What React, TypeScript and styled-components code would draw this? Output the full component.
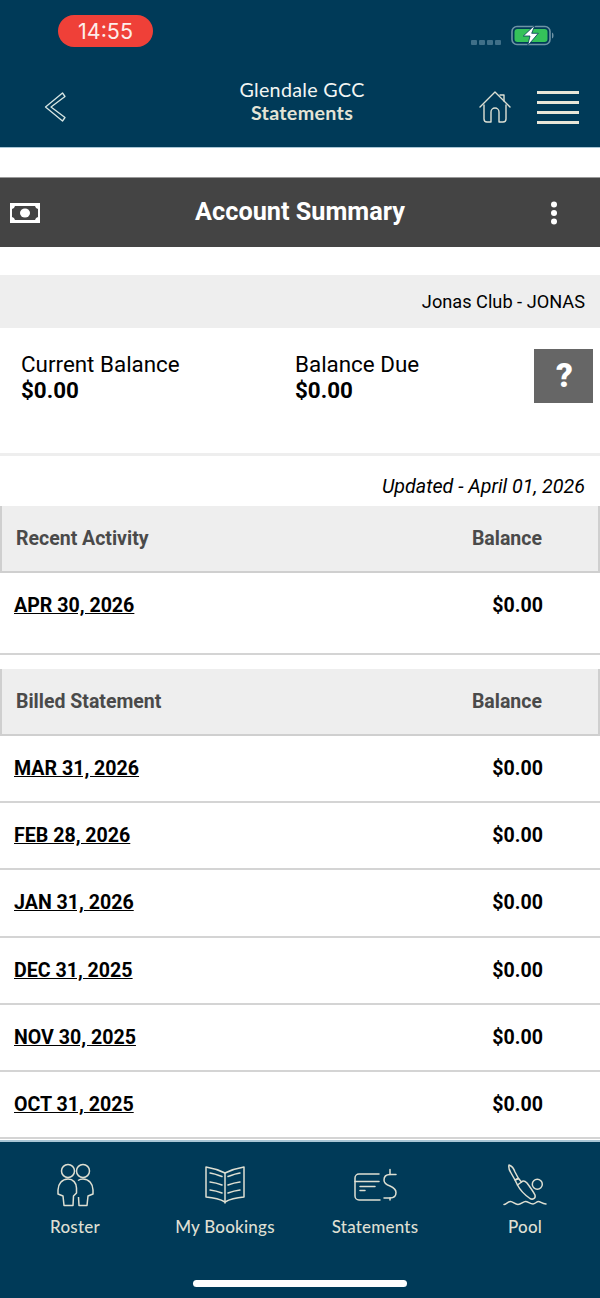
import React from 'react'
import styled, { createGlobalStyle } from 'styled-components'

const GlobalStyle = createGlobalStyle`
    html, body {
        margin: 0;
        padding: 0;
        background: #fff;
    }
    * {
        box-sizing: border-box;
    }
`

const Page = styled.div`
    width: 600px;
    height: 1298px;
    display: flex;
    flex-direction: column;
    overflow: hidden;
    font-family: 'Roboto', 'Liberation Sans', sans-serif;
    color: #000;
`

const Header = styled.header`
    height: 148px;
    flex: none;
    background: #003a58;
    border-bottom: 1px solid #a9c6d6;
`

const StatusBar = styled.div`
    height: 62px;
    padding: 15px 44px 0 58px;
    display: flex;
    justify-content: space-between;
    align-items: flex-start;
`

const TimePill = styled.div`
    width: 95px;
    height: 32px;
    border-radius: 16px;
    background: #ef4038;
    color: #fdeeea;
    font-family: 'Inter', 'Noto Sans', sans-serif;
    font-size: 21.5px;
    line-height: 32px;
    text-align: center;
`

const StatusRight = styled.div`
    display: flex;
    gap: 9px;
    margin-top: 10px;
`

const NavRow = styled.div`
    position: relative;
    height: 85px;
    padding: 5px 21px 0 44px;
    display: flex;
    align-items: center;
    justify-content: space-between;
`

const NavTitle = styled.div`
    position: absolute;
    left: 0;
    right: 0;
    top: 16px;
    padding-left: 4px;
    text-align: center;
    font-family: 'Lato', 'Noto Sans', sans-serif;
    color: #f2f5f3;
    font-size: 19.7px;
    line-height: 23px;
    letter-spacing: 0.3px;
    pointer-events: none;
    span {
        display: block;
        color: #e4e4d6;
        font-weight: 700;
    }
`

const NavRight = styled.div`
    display: flex;
    align-items: center;
    gap: 26px;
`

const Burger = styled.div`
    width: 42px;
    display: flex;
    flex-direction: column;
    gap: 7px;
    i {
        display: block;
        height: 3px;
        background: #e8e6d8;
    }
`

const TitleBar = styled.div`
    margin-top: 29px;
    height: 70px;
    flex: none;
    padding: 0 10px;
    background: #444;
    border-top: 1px solid #999;
    display: grid;
    grid-template-columns: 1fr auto 1fr;
    align-items: center;
    h1 {
        margin: -2px 0 0 0;
        color: #fff;
        font-size: 25.25px;
        font-weight: 700;
    }
    svg:last-child {
        justify-self: end;
        margin-right: 31px;
    }
`

const ClubStrip = styled.div`
    margin-top: 28px;
    height: 53px;
    flex: none;
    padding-right: 15px;
    background: #eee;
    display: flex;
    align-items: center;
    justify-content: flex-end;
    font-size: 18.2px;
`

const SummaryBlock = styled.div`
    height: 128px;
    flex: none;
    padding: 21px 7px 0 21px;
    display: flex;
    align-items: flex-start;
    border-bottom: 3px solid #eee;
`

const SummaryCell = styled.div<{ $width: number }>`
    width: ${(p) => p.$width}px;
    padding-top: 2px;
    font-size: 22.4px;
    line-height: 26px;
    font-weight: 400;
    b {
        display: block;
        font-weight: 700;
    }
`

const HelpButton = styled.div`
    width: 59px;
    height: 54px;
    margin-left: auto;
    padding-left: 2px;
    background: #666;
    color: #fff;
    font-size: 33px;
    font-weight: 900;
    line-height: 54px;
    text-align: center;
`

const UpdatedLine = styled.div`
    height: 50px;
    flex: none;
    padding: 10px 15px 0 0;
    display: flex;
    align-items: center;
    justify-content: flex-end;
    font-size: 19.7px;
    font-style: italic;
`

const HeadRow = styled.div`
    height: 67px;
    flex: none;
    padding: 0 57px 0 14px;
    background: #eee;
    border-left: 2px solid #cfcfcf;
    border-right: 2px solid #cfcfcf;
    border-bottom: 2px solid #cfcfcf;
    display: flex;
    align-items: center;
    justify-content: space-between;
    color: #4a4a4a;
    font-size: 19.5px;
    font-weight: 700;
    span:last-child {
        margin-right: -1px;
    }
`

const DataRow = styled.div<{ $tall?: boolean }>`
    height: ${(p) => (p.$tall ? 82 : 67.2)}px;
    flex: none;
    padding: ${(p) => (p.$tall ? '0 57px 15px 14px' : '0 57px 0 14px')};
    border-bottom: 2px solid #d4d4d4;
    display: flex;
    align-items: center;
    justify-content: space-between;
    font-size: 19.6px;
    font-weight: 700;
    a {
        color: #000;
        text-decoration: underline;
    }
`

const Spacer = styled.div`
    height: 14px;
    flex: none;
`

const TabBar = styled.nav`
    position: relative;
    margin-top: auto;
    height: 158px;
    flex: none;
    background: #003a58;
    border-top: 2px solid #a9c6d6;
    display: grid;
    grid-template-columns: repeat(4, 150px);
`

const Tab = styled.div`
    padding-top: 21px;
    display: flex;
    flex-direction: column;
    align-items: center;
    color: #dedfd2;
    font-family: 'Lato', 'Noto Sans', sans-serif;
    font-size: 17px;
    font-weight: 500;
    letter-spacing: 0.2px;
    svg {
        height: 46px;
        margin-bottom: 7px;
    }
`

const HomeIndicator = styled.div`
    position: absolute;
    left: 193px;
    bottom: 11px;
    width: 214px;
    height: 7px;
    border-radius: 4px;
    background: #fff;
`

const DotsSvg = styled.svg`
    margin-top: 13px;
`

const SignalDots = () => (
    <DotsSvg width="31" height="10" viewBox="0 0 31 10">
        {[0, 8, 16, 24].map((x) => (
            <rect key={x} x={x} y="2" width="6" height="5" rx="1" fill="#3f6f88" />
        ))}
    </DotsSvg>
)

const Battery = () => (
    <svg width="45" height="22" viewBox="0 0 45 22">
        <rect x="1" y="1.5" width="38" height="18" rx="5" fill="none" stroke="#6f93a6" strokeWidth="1.6" />
        <rect x="3.5" y="4" width="33" height="13" rx="3" fill="#35c25a" />
        <path d="M41 7.5c2 .5 2 5.500 0 6z" fill="#6f93a6" />
        <path d="M24 0 12.300 11H19l-2.300 9.700L27.300 8.300h-6.600z" fill="#fff" stroke="#003a58" strokeWidth="0.8" />
    </svg>
)

const BackIcon = () => (
    <svg width="24" height="32" viewBox="0 0 24 32" fill="none" stroke="#d7e6e4" strokeWidth="1.300" strokeLinejoin="round">
        <path d="M18.500 2 21 5.500 7 16 21 26.500 18.500 30 1.500 16z" />
    </svg>
)

const HomeIcon = () => (
    <svg width="32" height="32" viewBox="0 0 32 32" fill="none" stroke="#dde0d4" strokeWidth="1.400" strokeLinecap="round" strokeLinejoin="round">
        <path d="M1 16 16 1l15 15" />
        <path d="M21 4h4v6" />
        <path d="M5 14v14a3 3 0 0 0 3 3h4V21a4 4 0 0 1 8 0v10h4a3 3 0 0 0 3-3V14" />
    </svg>
)

const CashIcon = () => (
    <svg width="30" height="20" viewBox="0 0 30 20">
        <path
            fillRule="evenodd"
            d="M0 0h30v20H0zM5 3a4 4 0 0 1-3 3v8a4 4 0 0 1 3 3h20a4 4 0 0 1 3-3V6a4 4 0 0 1-3-3z"
            fill="#fff"
        />
        <ellipse cx="15" cy="10" rx="5" ry="4.500" fill="#fff" />
    </svg>
)

const KebabIcon = () => (
    <svg width="10" height="24" viewBox="0 0 10 24" fill="#fff">
        <circle cx="5" cy="3.500" r="3" />
        <circle cx="5" cy="12" r="3" />
        <circle cx="5" cy="20.500" r="3" />
    </svg>
)

const RosterIcon = () => (
    <svg width="38" height="46" viewBox="0 0 38 46" fill="none" stroke="#dedfd2" strokeWidth="1.500" strokeLinejoin="round">
        <circle cx="12" cy="8" r="6.500" />
        <circle cx="27" cy="8" r="6.500" />
        <path d="M12 16C6 16 2 21 2 27v4l5 2 1 9.500h9l.5-9.500 3-3v-5C20.500 20 17 16 12 16z" />
        <path d="M22 17.500c1.500-1 3-1.500 5-1.500 6 0 10 5 10 11v4l-5 2-1 9.500h-8l-.5-8.500" />
    </svg>
)

const BookIcon = () => (
    <svg width="42" height="46" viewBox="0 0 42 46" fill="none" stroke="#dedfd2" strokeWidth="1.500" strokeLinecap="round" strokeLinejoin="round">
        <path d="M21 10C15 7 8 5 2 4v30c7 .5 14 2 19 5 5-3 12-4.500 19-5V4c-6 1-13 3-19 6z" />
        <path d="M21 10v30" />
        <path d="M6 10c4 .5 8 2 12 3.500M6 19c4 .5 8 1.500 12 3M6 27c4 .5 8 1.500 12 3" />
        <path d="M36 10c-4 .5-8 2-12 3.500M36 19c-4 .5-8 1.500-12 3M36 27c-4 .5-8 1.500-12 3" />
    </svg>
)

const StatementsIcon = () => (
    <svg width="44" height="46" viewBox="0 0 44 46" fill="none" stroke="#dedfd2" strokeWidth="1.500" strokeLinecap="round" strokeLinejoin="round">
        <path d="M26 11H6a4 4 0 0 0-4 4v18a4 4 0 0 0 4 4h21" />
        <path d="M2 18.500h24M7 23.500h15M7 27.500h5" />
        <path d="M43 11.500h-6c-4 0-6 2.500-6 5.500 0 3.500 3 5 6 6 3.500 1.500 6 3 6 6.500 0 3.500-2.500 5.500-6 5.500h-6" />
        <path d="M37 6.500v5M37 35v2" />
    </svg>
)

const PoolIcon = () => (
    <svg width="44" height="46" viewBox="0 0 44 46" fill="none" stroke="#dedfd2" strokeWidth="1.500" strokeLinecap="round" strokeLinejoin="round">
        <path d="M6 2c3 1 5 4 6 7l3.500 6.500L12 17 7.500 9C6 6.500 5.500 4 6 2z" />
        <path d="M12 17l3.500-1.500 3 3.500-4 3z" />
        <path d="M18.500 19c1.500-1.500 3.500-1 5.500 1 3 4 6 8 8 12 1 3.500-2.500 5-5 3.500-5-3.500-10-8.500-12.500-13.500" />
        <circle cx="34.300" cy="21.300" r="5" />
        <path d="M1 41.500c2 0 4-3 6.500-3s4.500 3 7.500 3 5-3 7.500-3 4.500 2.500 7.500 2.500c2 0 3.500-2.500 5.500-2.500s3.500 2.500 7.500 2.500" />
    </svg>
)

const recentRows = [{ date: 'APR 30, 2026', balance: '$0.00' }]

const billedRows = [
    { date: 'MAR 31, 2026', balance: '$0.00' },
    { date: 'FEB 28, 2026', balance: '$0.00' },
    { date: 'JAN 31, 2026', balance: '$0.00' },
    { date: 'DEC 31, 2025', balance: '$0.00' },
    { date: 'NOV 30, 2025', balance: '$0.00' },
    { date: 'OCT 31, 2025', balance: '$0.00' },
]

export default function App() {
    return (
        <>
            <GlobalStyle />
            <Page>
                <Header>
                    <StatusBar>
                        <TimePill>14:55</TimePill>
                        <StatusRight>
                            <SignalDots />
                            <Battery />
                        </StatusRight>
                    </StatusBar>
                    <NavRow>
                        <BackIcon />
                        <NavTitle>
                            Glendale GCC
                            <span>Statements</span>
                        </NavTitle>
                        <NavRight>
                            <HomeIcon />
                            <Burger>
                                <i />
                                <i />
                                <i />
                                <i />
                            </Burger>
                        </NavRight>
                    </NavRow>
                </Header>

                <TitleBar>
                    <CashIcon />
                    <h1>Account Summary</h1>
                    <KebabIcon />
                </TitleBar>

                <ClubStrip>Jonas Club - JONAS</ClubStrip>

                <SummaryBlock>
                    <SummaryCell $width={274}>
                        Current Balance
                        <b>$0.00</b>
                    </SummaryCell>
                    <SummaryCell $width={200}>
                        Balance Due
                        <b>$0.00</b>
                    </SummaryCell>
                    <HelpButton>?</HelpButton>
                </SummaryBlock>

                <UpdatedLine>Updated - April 01, 2026</UpdatedLine>

                <HeadRow>
                    <span>Recent Activity</span>
                    <span>Balance</span>
                </HeadRow>
                {recentRows.map((row) => (
                    <DataRow $tall key={row.date}>
                        <a>{row.date}</a>
                        <span>{row.balance}</span>
                    </DataRow>
                ))}

                <Spacer />

                <HeadRow>
                    <span>Billed Statement</span>
                    <span>Balance</span>
                </HeadRow>
                {billedRows.map((row) => (
                    <DataRow key={row.date}>
                        <a>{row.date}</a>
                        <span>{row.balance}</span>
                    </DataRow>
                ))}

                <TabBar>
                    <Tab>
                        <RosterIcon />
                        Roster
                    </Tab>
                    <Tab>
                        <BookIcon />
                        My Bookings
                    </Tab>
                    <Tab>
                        <StatementsIcon />
                        Statements
                    </Tab>
                    <Tab>
                        <PoolIcon />
                        Pool
                    </Tab>
                    <HomeIndicator />
                </TabBar>
            </Page>
        </>
    )
}
